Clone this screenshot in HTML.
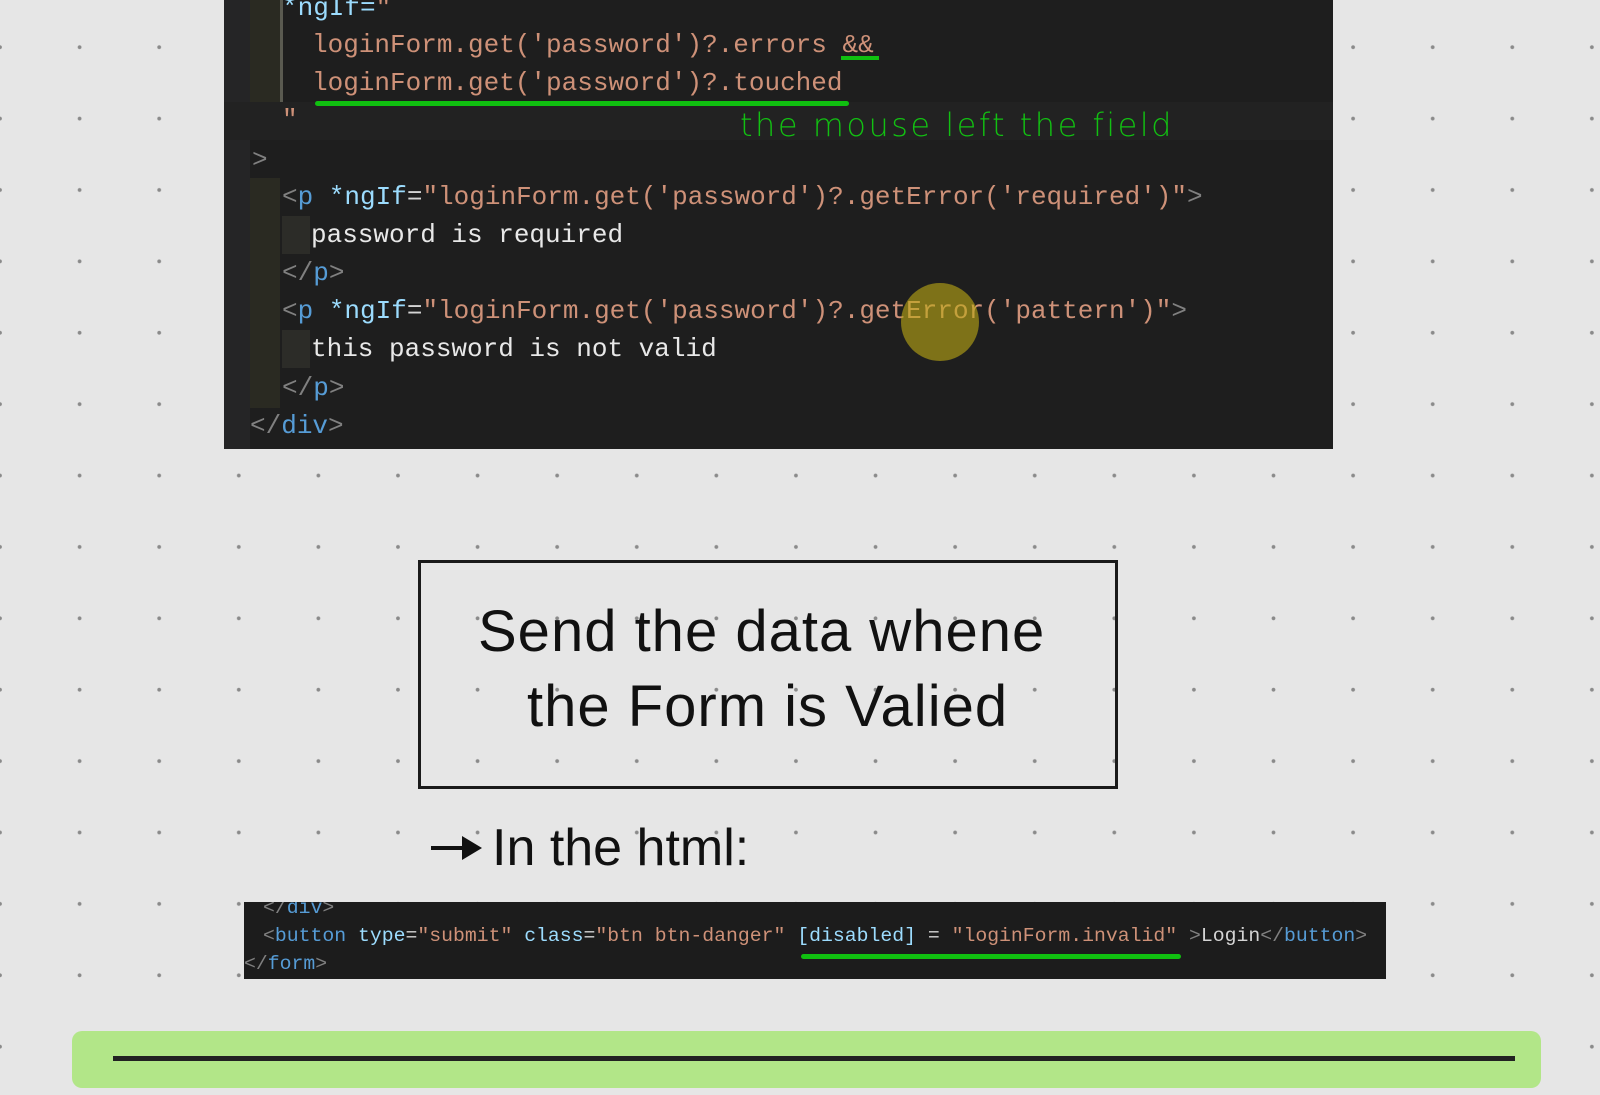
<!DOCTYPE html>
<html><head><meta charset="utf-8"><style>
*{margin:0;padding:0;box-sizing:border-box}
body{width:1600px;height:1095px;overflow:hidden;background:#e6e6e6;position:relative;font-family:"Liberation Sans",sans-serif;
background-image:radial-gradient(circle,#8a8a8a 1.6px,transparent 2.2px);background-size:79.6px 71.4px;background-position:-39.8px 11.5px}
.code{position:absolute;background:#1e1e1e;font-family:"Liberation Mono",monospace;color:#d4d4d4;white-space:pre;overflow:hidden}
.l{position:absolute;height:38px;line-height:38px}
.t{color:#808080}.b{color:#569cd6}.a{color:#9cdcfe}.s{color:#ce9178}.w{color:#e8e8e8}
.hand{position:absolute;font-family:"Liberation Sans",sans-serif;color:#111;white-space:nowrap}
</style></head><body>
<div class="code" style="left:224px;top:0;width:1109px;height:449px;font-size:26px">
 <div style="position:absolute;left:0;top:0;width:26px;height:449px;background:#252526"></div>
 <div style="position:absolute;left:26px;top:0;width:30px;height:140px;background:#2a2a22"></div>
 <div style="position:absolute;left:56px;top:0;width:3px;height:140px;background:#5a5a50"></div>
 <div style="position:absolute;left:26px;top:178px;width:30px;height:230px;background:#2a2a22"></div>
 <div style="position:absolute;left:58px;top:216px;width:28px;height:38px;background:#2c2c28"></div>
 <div style="position:absolute;left:58px;top:330px;width:28px;height:38px;background:#2c2c28"></div>
 <div style="position:absolute;left:0;top:102px;width:1109px;height:38px;background:#222"></div>
 <div class="l a" style="left:58px;top:-11px">*ngIf=<span class="s">"</span></div>
 <div class="l s" style="left:88px;top:26px">loginForm.get('password')?.errors &amp;&amp;</div>
 <div class="l s" style="left:88px;top:64px">loginForm.get('password')?.touched</div>
 <div class="l s" style="left:58px;top:101px">"</div>
 <div class="l t" style="left:28px;top:141px">&gt;</div>
 <div class="l" style="left:58px;top:178px"><span class="t">&lt;</span><span class="b">p</span> <span class="a">*ngIf</span>=<span class="s">"loginForm.get('password')?.getError('required')"</span><span class="t">&gt;</span></div>
 <div class="l w" style="left:87px;top:216px">password is required</div>
 <div class="l" style="left:58px;top:254px"><span class="t">&lt;/</span><span class="b">p</span><span class="t">&gt;</span></div>
 <div class="l" style="left:58px;top:292px"><span class="t">&lt;</span><span class="b">p</span> <span class="a">*ngIf</span>=<span class="s">"loginForm.get('password')?.getError('pattern')"</span><span class="t">&gt;</span></div>
 <div class="l w" style="left:87px;top:330px">this password is not valid</div>
 <div class="l" style="left:58px;top:369px"><span class="t">&lt;/</span><span class="b">p</span><span class="t">&gt;</span></div>
 <div class="l" style="left:26px;top:407px"><span class="t">&lt;/</span><span class="b">div</span><span class="t">&gt;</span></div>
 <div style="position:absolute;left:617px;top:56px;width:38px;height:4px;background:#10c010"></div>
 <div style="position:absolute;left:91px;top:101px;width:534px;height:5px;border-radius:3px;background:#10c010"></div>
 <div style="position:absolute;left:677px;top:283px;width:78px;height:78px;border-radius:50%;background:rgba(190,170,20,0.6)"></div>
</div>
<div class="hand" style="left:740px;top:106px;font-size:32px;color:#12c012;font-family:'DejaVu Sans',sans-serif;font-weight:300;letter-spacing:2.5px">the mouse left the field</div>
<div style="position:absolute;left:418px;top:560px;width:700px;height:229px;border:3px solid #1a1a1a"></div>
<div class="hand" style="left:478px;top:598px;font-size:58px;letter-spacing:1px">Send the data whene</div>
<div class="hand" style="left:527px;top:673px;font-size:58px;letter-spacing:1px">the Form is Valied</div>
<div style="position:absolute;left:431px;top:846px;width:40px;height:4px;background:#111"></div>
<div style="position:absolute;left:462px;top:836px;width:0;height:0;border-left:20px solid #111;border-top:12px solid transparent;border-bottom:12px solid transparent"></div>
<div class="hand" style="left:492px;top:818px;font-size:52px">In the html:</div>
<div class="code" style="left:244px;top:902px;width:1142px;height:77px;font-size:19.8px;background:#1c1c1c">
 <div class="l" style="left:19px;top:-8px;line-height:28px"><span class="t">&lt;/</span><span class="b">div</span><span class="t">&gt;</span></div>
 <div class="l" style="left:19px;top:20px;line-height:28px"><span class="t">&lt;</span><span class="b">button</span> <span class="a">type</span>=<span class="s">"submit"</span> <span class="a">class</span>=<span class="s">"btn btn-danger"</span> <span class="a">[disabled]</span> = <span class="s">"loginForm.invalid"</span> <span class="t">&gt;</span>Login<span class="t">&lt;/</span><span class="b">button</span><span class="t">&gt;</span></div>
 <div class="l" style="left:0;top:48px;line-height:28px"><span class="t">&lt;/</span><span class="b">form</span><span class="t">&gt;</span></div>
 <div style="position:absolute;left:557px;top:52px;width:380px;height:5px;border-radius:3px;background:#10c010"></div>
</div>
<div style="position:absolute;left:72px;top:1031px;width:1469px;height:57px;background:#b2e688;border-radius:10px"></div>
<div style="position:absolute;left:113px;top:1056px;width:1402px;height:5px;background:#222"></div>
</body></html>
